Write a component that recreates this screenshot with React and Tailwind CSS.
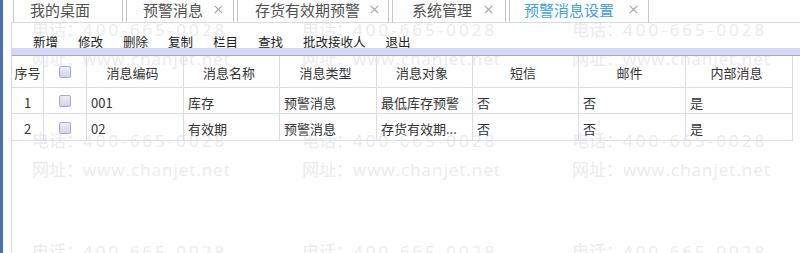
import React from "react";

const tabs = [
  { label: "我的桌面", w: "w-[110px] pl-[16px]", close: false, active: false, xm: "" },
  { label: "预警消息", w: "w-[108px] pl-[16px]", close: true, active: false, xm: "ml-[11px]" },
  { label: "存货有效期预警", w: "w-[152px] pl-[17px]", close: true, active: false, xm: "ml-[10px]" },
  { label: "系统管理", w: "w-[114px] pl-[19px]", close: true, active: false, xm: "ml-[12px]" },
  { label: "预警消息设置", w: "w-[140px] pl-[14px]", close: true, active: true, xm: "ml-[15px]" },
];

const tools = ["新增", "修改", "删除", "复制", "栏目", "查找", "批改接收人", "退出"];

const headers = ["消息编码", "消息名称", "消息类型", "消息对象", "短信", "邮件", "内部消息"];

const rows = [
  ["1", "001", "库存", "预警消息", "最低库存预警", "否", "否", "是"],
  ["2", "02", "有效期", "预警消息", "存货有效期...", "否", "否", "是"],
];

function CloseX() {
  return (
    <svg width="9" height="9" viewBox="0 0 9 9" className="shrink-0">
      <path d="M0.8 0.8 L8.2 8.2 M8.2 0.8 L0.8 8.2" stroke="#a6a6a6" strokeWidth="1.2" fill="none" />
    </svg>
  );
}

function Check() {
  return (
    <div className="w-[12px] h-[12px] rounded-[2px] border border-[#a9a9c6] bg-gradient-to-b from-[#ececf9] to-[#d3d3ee]" />
  );
}

export default function App() {
  const cell = "flex items-center border-r border-b border-[#dadaf2]";
  return (
    <div className="relative w-[800px] h-[253px] overflow-hidden bg-white font-['Noto_Sans_CJK_SC',sans-serif]">
      {/* watermark */}
      <div className="absolute left-[32px] top-[15px] grid grid-cols-[270px_270px_270px] auto-rows-[111px] text-[17px] text-[#ebebeb] font-['Open_Sans','Noto_Sans_CJK_SC',sans-serif] whitespace-nowrap pointer-events-none">
        {Array.from({ length: 9 }).map((_, i) => (
          <div key={i} className="flex flex-col">
            <div className="h-[29px] leading-[29px]">
              电话：<span className="tracking-[3px]">400-665-0028</span>
            </div>
            <div className="h-[29px] leading-[29px]">
              网址：<span className="tracking-[1px]">www.chanjet.net</span>
            </div>
          </div>
        ))}
      </div>

      <div className="relative flex h-full">
        <div className="w-[3px] h-full bg-[#4d6fae]" />
        <div className="w-[8px]" />
        <div className="flex-1 flex flex-col min-w-0">
          {/* tabs */}
          <div className="h-[23px] flex gap-[3px] pl-[2px] border-b border-[#d8d8e6] shrink-0">
            {tabs.map((t) => (
              <div
                key={t.label}
                className={`${t.w} h-full flex items-center pb-[3px] border-x border-[#c6c6c6] bg-white text-[15px] leading-[17px] whitespace-nowrap`}
              >
                <span className={t.active ? "text-[#3fa0e2]" : "text-[#505050]"}>{t.label}</span>
                {t.close && (
                  <span className={t.xm}>
                    <CloseX />
                  </span>
                )}
              </div>
            ))}
          </div>

          {/* panel */}
          <div className="flex-1 flex flex-col border-l border-[#d6d6f0]">
            <div className="h-[25px] flex pl-[21px] gap-[20px] pt-[12px] text-[12.5px] leading-[13px] text-[#222] whitespace-nowrap shrink-0">
              {tools.map((t) => (
                <span key={t}>{t}</span>
              ))}
            </div>
            <div className="h-[8px] bg-[#d7d7f6] border-b border-[#ababb6] shrink-0" />

            <div className="grid grid-cols-[32px_43px_97px_96px_97px_96px_106px_107px_107px] w-[781px] text-[13px] text-[#333] leading-[15px]">
              <div className={`${cell} h-[32px] justify-center pt-[1px]`}>序号</div>
              <div className={`${cell} h-[32px] justify-center pt-[1px]`}>
                <Check />
              </div>
              {headers.map((h) => (
                <div key={h} className={`${cell} h-[32px] justify-center pr-[5px] pt-[1px]`}>
                  {h}
                </div>
              ))}
              {rows.map((r, ri) => (
                <React.Fragment key={ri}>
                  <div className={`${cell} ${ri === 0 ? "h-[26px]" : "h-[27px]"} justify-center pt-[3px]`}>{r[0]}</div>
                  <div className={`${cell} ${ri === 0 ? "h-[26px]" : "h-[27px]"} justify-center pt-[1px]`}>
                    <Check />
                  </div>
                  {r.slice(1).map((v, ci) => (
                    <div
                      key={ci}
                      className={`${cell} ${ri === 0 ? "h-[26px]" : "h-[27px]"} pl-[4px] pt-[3px] whitespace-nowrap`}
                    >
                      {v}
                    </div>
                  ))}
                </React.Fragment>
              ))}
            </div>
          </div>
        </div>
      </div>
    </div>
  );
}
